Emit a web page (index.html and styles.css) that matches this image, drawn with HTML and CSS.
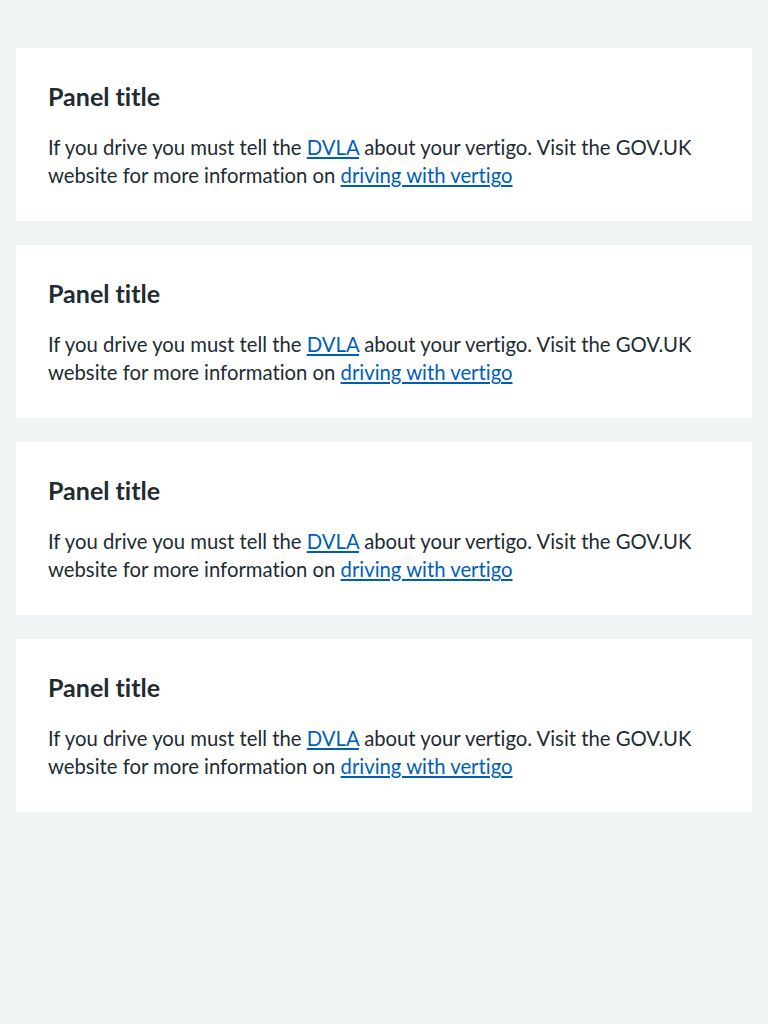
FILE: index.html
```html
<!DOCTYPE html>
<html lang="en">
<head>
<meta charset="utf-8">
<title>Panels</title>
<link rel="stylesheet" href="styles.css">
</head>
<body>
<main class="page">
  <div class="panel">
    <h3 class="panel-title">Panel title</h3>
    <p class="panel-text">If you drive you must tell the <a href="#">DVLA</a> about your vertigo. Visit the GOV.UK website for more information on <a href="#">driving with vertigo</a></p>
  </div>
  <div class="panel">
    <h3 class="panel-title">Panel title</h3>
    <p class="panel-text">If you drive you must tell the <a href="#">DVLA</a> about your vertigo. Visit the GOV.UK website for more information on <a href="#">driving with vertigo</a></p>
  </div>
  <div class="panel">
    <h3 class="panel-title">Panel title</h3>
    <p class="panel-text">If you drive you must tell the <a href="#">DVLA</a> about your vertigo. Visit the GOV.UK website for more information on <a href="#">driving with vertigo</a></p>
  </div>
  <div class="panel">
    <h3 class="panel-title">Panel title</h3>
    <p class="panel-text">If you drive you must tell the <a href="#">DVLA</a> about your vertigo. Visit the GOV.UK website for more information on <a href="#">driving with vertigo</a></p>
  </div>
</main>
</body>
</html>
```
FILE: styles.css
```css
html, body {
  margin: 0;
  padding: 0;
  background: #f0f4f5;
}
body {
  font-family: Lato, "Liberation Sans", sans-serif;
  font-variant-ligatures: none;
  color: #212b32;
}
.page {
  padding: 48px 16px;
  display: flex;
  flex-direction: column;
  gap: 24px;
}
.panel {
  background: #ffffff;
  padding: 32px;
}
.panel-title {
  margin: 0 0 21px;
  font-size: 25px;
  line-height: 32px;
  font-weight: 700;
}
.panel-text {
  margin: 0;
  font-size: 20.3px;
  line-height: 28px;
  max-width: 660px;
}
.panel-text a {
  color: #005eb8;
  text-decoration: underline;
  text-underline-offset: 2px;
}
```
